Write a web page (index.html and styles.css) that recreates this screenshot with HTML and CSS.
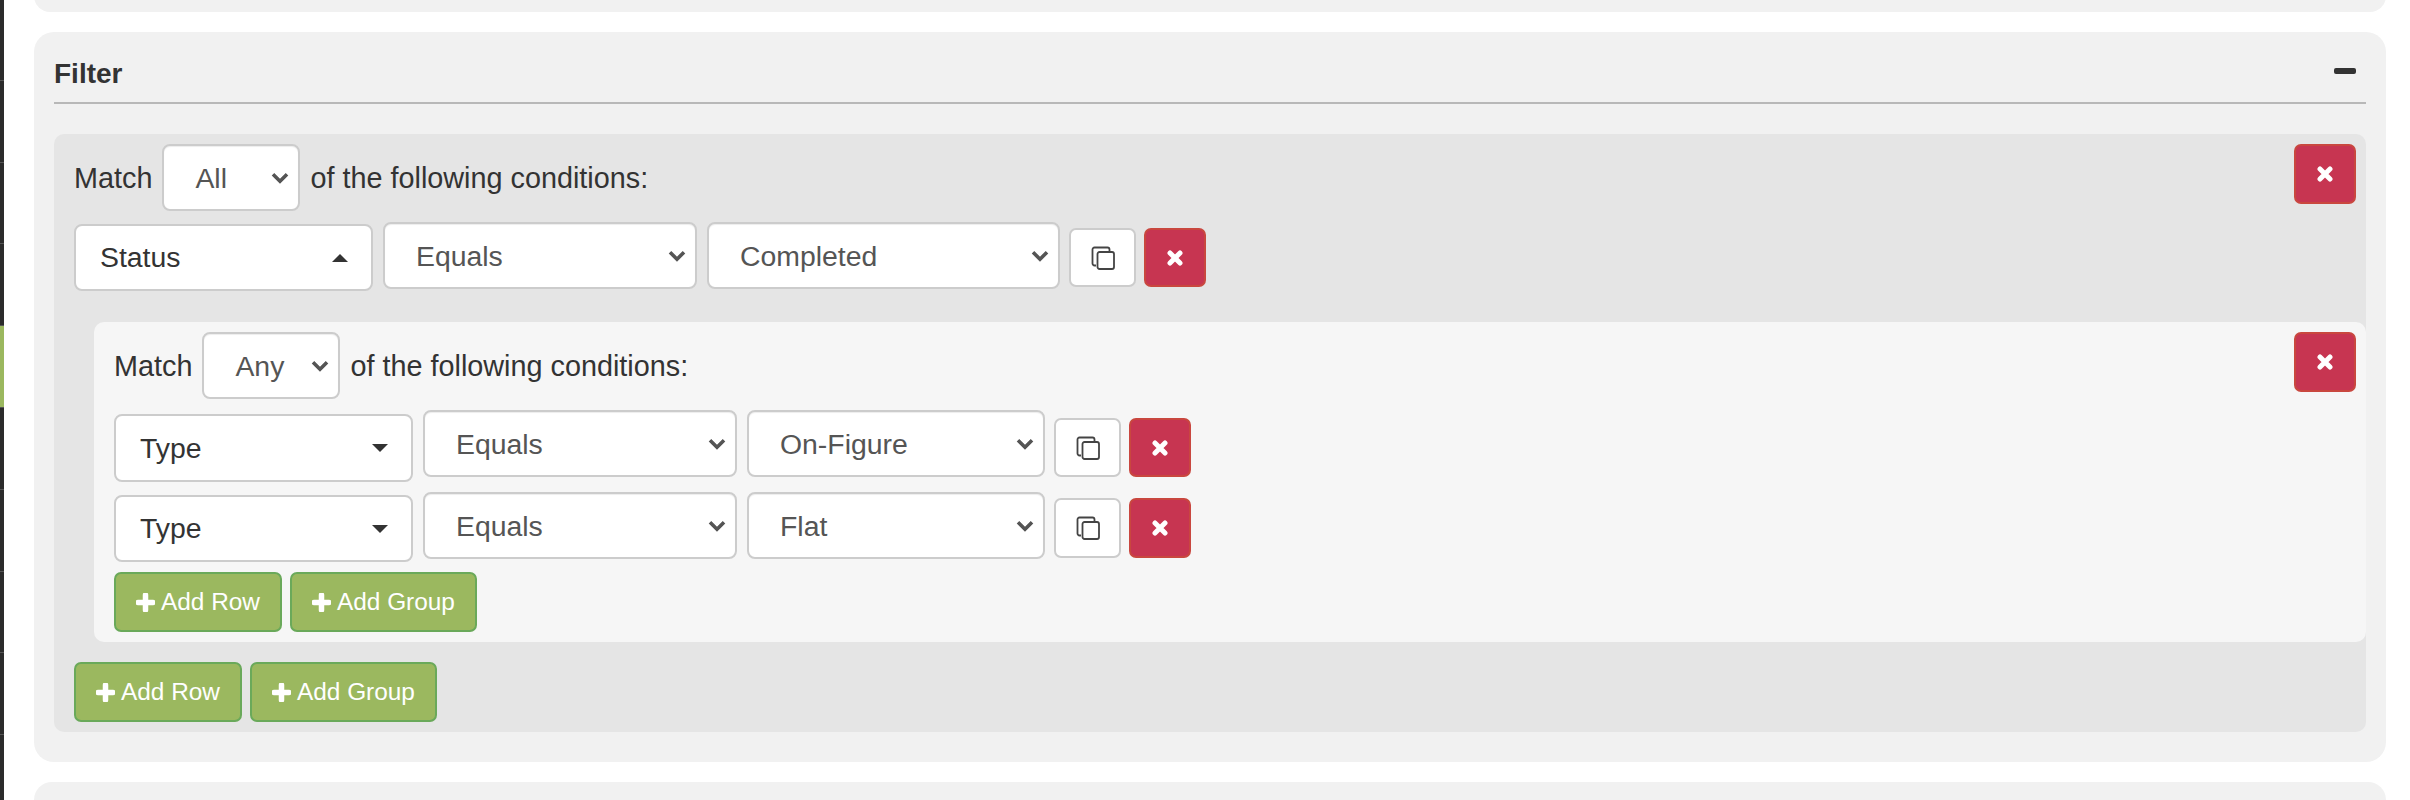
FILE: index.html
```html
<!DOCTYPE html>
<html lang="en">
<head>
<meta charset="utf-8">
<title>Filter</title>
<link rel="stylesheet" href="styles.css">
</head>
<body>
<nav class="rail">
  <div class="rail-item rail-first"></div>
  <div class="rail-item"></div>
  <div class="rail-item"></div>
  <div class="rail-item"></div>
  <div class="rail-item rail-active"></div>
  <div class="rail-item"></div>
  <div class="rail-item"></div>
  <div class="rail-item"></div>
  <div class="rail-item"></div>
  <div class="rail-item"></div>
</nav>
<main class="page">
  <section class="card card-prev"></section>
  <section class="card card-filter">
    <header class="card-head">
      <h2 class="card-title">Filter</h2>
      <span class="collapse"></span>
    </header>

    <div class="group group-outer">
      <button class="btn btn-del btn-del-group" type="button" aria-label="Remove group"><svg class="ico-x" viewBox="0 0 16 16"><path d="M3 3l10 10M13 3L3 13"/></svg></button>
      <div class="match">
        <span class="match-text">Match</span>
        <select class="sel sel-match"><option>All</option></select>
        <span class="match-text">of the following conditions:</span>
      </div>
      <div class="row row-a">
        <button class="drop drop-a" type="button"><span>Status</span><i class="caret caret-up"></i></button>
        <select class="sel sel-op"><option>Equals</option></select>
        <select class="sel sel-val-wide"><option>Completed</option></select>
        <button class="btn btn-copy btn-a" type="button" aria-label="Copy"><svg class="ico-copy" viewBox="0 0 24 24"><path d="M5 19.500H3.500a2 2 0 0 1-2-2V3.500a2 2 0 0 1 2-2h13a2 2 0 0 1 2 2V5"/><rect x="6.500" y="6" width="16.500" height="17" rx="2"/></svg></button>
        <button class="btn btn-del btn-a" type="button" aria-label="Remove"><svg class="ico-x" viewBox="0 0 16 16"><path d="M3 3l10 10M13 3L3 13"/></svg></button>
      </div>

      <div class="group group-inner">
        <button class="btn btn-del btn-del-group" type="button" aria-label="Remove group"><svg class="ico-x" viewBox="0 0 16 16"><path d="M3 3l10 10M13 3L3 13"/></svg></button>
        <div class="match">
          <span class="match-text">Match</span>
          <select class="sel sel-match"><option>Any</option></select>
          <span class="match-text">of the following conditions:</span>
        </div>
        <div class="row row-b">
          <button class="drop drop-b" type="button"><span>Type</span><i class="caret"></i></button>
          <select class="sel sel-op"><option>Equals</option></select>
          <select class="sel sel-val"><option>On-Figure</option></select>
          <button class="btn btn-copy btn-b" type="button" aria-label="Copy"><svg class="ico-copy" viewBox="0 0 24 24"><path d="M5 19.500H3.500a2 2 0 0 1-2-2V3.500a2 2 0 0 1 2-2h13a2 2 0 0 1 2 2V5"/><rect x="6.500" y="6" width="16.500" height="17" rx="2"/></svg></button>
          <button class="btn btn-del btn-b" type="button" aria-label="Remove"><svg class="ico-x" viewBox="0 0 16 16"><path d="M3 3l10 10M13 3L3 13"/></svg></button>
        </div>
        <div class="row row-c">
          <button class="drop drop-c" type="button"><span>Type</span><i class="caret"></i></button>
          <select class="sel sel-op"><option>Equals</option></select>
          <select class="sel sel-val"><option>Flat</option></select>
          <button class="btn btn-copy btn-c" type="button" aria-label="Copy"><svg class="ico-copy" viewBox="0 0 24 24"><path d="M5 19.500H3.500a2 2 0 0 1-2-2V3.500a2 2 0 0 1 2-2h13a2 2 0 0 1 2 2V5"/><rect x="6.500" y="6" width="16.500" height="17" rx="2"/></svg></button>
          <button class="btn btn-del btn-c" type="button" aria-label="Remove"><svg class="ico-x" viewBox="0 0 16 16"><path d="M3 3l10 10M13 3L3 13"/></svg></button>
        </div>
        <div class="actions">
          <button class="btn btn-add" type="button"><svg class="ico-plus" viewBox="0 0 19 19"><path d="M9.500 2v15M2 9.500h15"/></svg>Add Row</button>
          <button class="btn btn-add" type="button"><svg class="ico-plus" viewBox="0 0 19 19"><path d="M9.500 2v15M2 9.500h15"/></svg>Add Group</button>
        </div>
      </div>

      <div class="actions actions-outer">
        <button class="btn btn-add" type="button"><svg class="ico-plus" viewBox="0 0 19 19"><path d="M9.500 2v15M2 9.500h15"/></svg>Add Row</button>
        <button class="btn btn-add" type="button"><svg class="ico-plus" viewBox="0 0 19 19"><path d="M9.500 2v15M2 9.500h15"/></svg>Add Group</button>
      </div>
    </div>
  </section>
  <section class="card card-next"></section>
</main>
</body>
</html>
```
FILE: styles.css
```css
* { box-sizing: border-box; }

html, body {
  margin: 0;
  height: 800px;
  overflow: hidden;
  background: #fff;
}

body {
  display: flex;
  font-family: "Liberation Sans", Arial, sans-serif;
  font-size: 28px;
  color: #333;
}

/* left rail */
.rail {
  flex: none;
  width: 4px;
  height: 800px;
  overflow: hidden;
  background: #2b2b2b;
}
.rail-item {
  height: 81.800px;
  border-bottom: 1px solid #555;
}
.rail-first { margin-top: -1px; }
.rail-active { background: #9bb85f; }

/* page */
.page {
  flex: 1;
  min-width: 0;
  height: 800px;
  padding: 0 24px 0 30px;
}

.card {
  background: #f1f1f1;
  border-radius: 20px;
}
.card-prev { height: 32px; margin-top: -20px; }
.card-filter { margin-top: 20px; padding: 0 20px 30px; }
.card-next { height: 18px; margin-top: 20px; border-radius: 20px 20px 0 0; }

.card-head {
  display: flex;
  align-items: center;
  justify-content: space-between;
  height: 72px;
  padding: 14px 10px 0 0;
  border-bottom: 2px solid #b8b8b8;
  margin-bottom: 30px;
}
.card-title {
  margin: 0;
  font-size: 28px;
  font-weight: 700;
  color: #333;
}
.collapse {
  width: 22px;
  height: 6px;
  margin-top: -6px;
  border-radius: 2px;
  background: #333;
}

/* groups */
.group {
  position: relative;
  border-radius: 10px;
  padding: 10px 20px;
}
.group-outer { background: #e5e5e5; }
.group-inner {
  background: #f6f6f6;
  margin: 31px -20px 0 20px;
}
.btn-del-group {
  position: absolute;
  top: 10px;
  right: 10px;
  height: 60px;
}

.match {
  display: flex;
  align-items: center;
  gap: 10px;
  height: 67px;
}
.match-text {
  font-size: 28.800px;
  padding-top: 2px;
}

.row {
  display: flex;
  align-items: flex-start;
  gap: 10px;
}
.row-a, .row-b { margin-top: 11px; }
.row-c { margin-top: 10px; }

/* selects */
.sel {
  appearance: none;
  -webkit-appearance: none;
  height: 67px;
  border: 2px solid #ccc;
  border-radius: 8px;
  padding: 0 30px 0 31px;
  font: inherit;
  font-size: 28.400px;
  color: #555;
  box-shadow: inset 0 1px 1px rgba(0, 0, 0, .075);
  background: #fff url("data:image/svg+xml,%3Csvg xmlns='http://www.w3.org/2000/svg' width='18' height='12' viewBox='0 0 18 12'%3E%3Cpath d='M2 2.200l7 7 7-7' fill='none' stroke='%23555' stroke-width='3.600'/%3E%3C/svg%3E") no-repeat right 9px center;
}
.sel-match { width: 138px; }
.sel-op { width: 314px; }
.sel-val-wide { width: 353px; }
.sel-val { width: 298px; }

/* search dropdowns */
.drop {
  display: flex;
  align-items: center;
  justify-content: space-between;
  flex: none;
  width: 299px;
  height: 67px;
  padding: 0 23px 0 24px;
  border: 2px solid #ccc;
  border-radius: 8px;
  background: #fff;
  font: inherit;
  font-size: 28.400px;
  color: #333;
}
.drop-a { margin-top: 2px; }
.drop-b { margin-top: 4px; height: 68px; }
.drop-c { margin-top: 3px; }

.caret {
  width: 0;
  height: 0;
  border-left: 8px solid transparent;
  border-right: 8px solid transparent;
  border-top: 8px solid #333;
}
.caret-up {
  border-top: 0;
  border-bottom: 8px solid #333;
}

/* buttons */
.btn {
  display: inline-flex;
  align-items: center;
  justify-content: center;
  height: 60px;
  padding: 0;
  border: 2px solid transparent;
  border-radius: 7px;
  font: inherit;
}
.btn-copy {
  width: 67px;
  margin-left: -1px;
  background: #fff;
  border-color: #ccc;
}
.btn-del {
  width: 62px;
  background: #c73551;
  border-color: #c9473f;
}
.row .btn-del { margin-left: -2px; }
.btn-a { margin-top: 6px; height: 59px; }
.btn-b { margin-top: 8px; height: 59px; }
.btn-c { margin-top: 6px; }

.btn-add {
  gap: 6px;
  padding: 0 20px;
  font-size: 24.400px;
  color: #fff;
  background: #9bb85f;
  border-color: #6aa95a;
}

.actions {
  display: flex;
  gap: 8px;
  margin-top: 10px;
}
.actions-outer { margin-top: 20px; }

/* icons */
.ico-x {
  width: 16px;
  height: 16px;
  fill: none;
  stroke: #fff;
  stroke-width: 5;
  stroke-linecap: round;
}
.ico-copy {
  width: 24px;
  height: 24px;
  fill: none;
  stroke: #444;
  stroke-width: 1.800;
}
.ico-plus {
  width: 19px;
  height: 19px;
  fill: none;
  stroke: #fff;
  stroke-width: 5.500;
  stroke-linecap: round;
}
```
